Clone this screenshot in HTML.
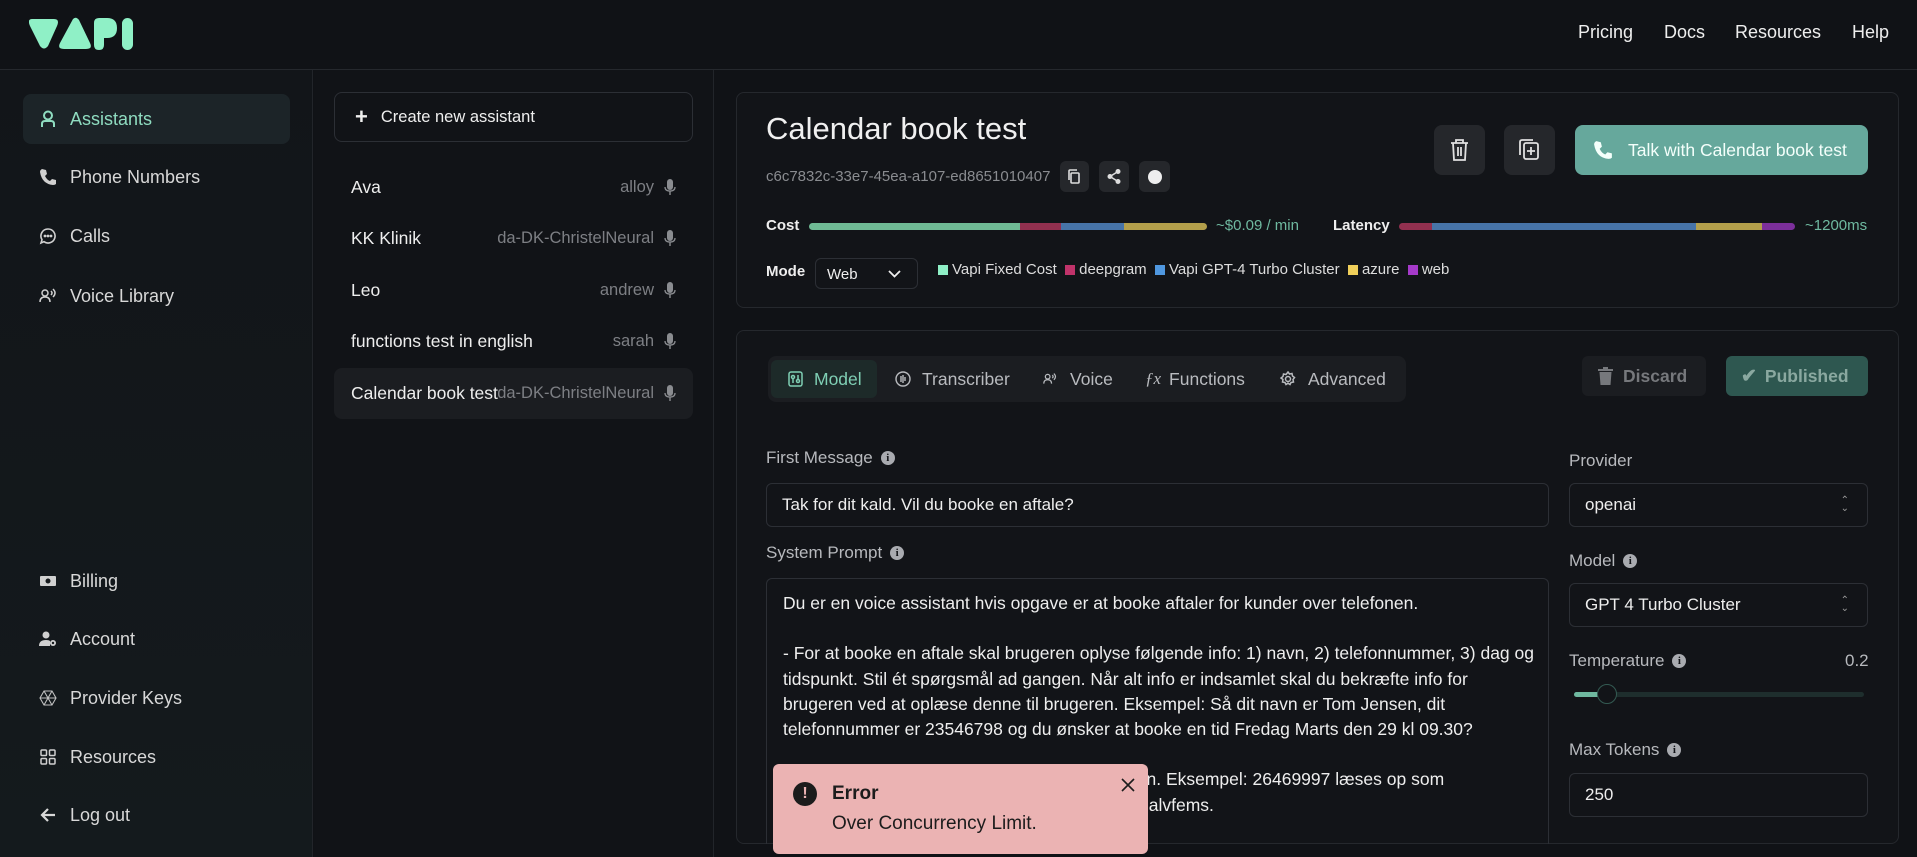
<!DOCTYPE html>
<html><head><meta charset="utf-8">
<style>
*{box-sizing:border-box;margin:0;padding:0}
body{width:1917px;height:857px;overflow:hidden;background:#101216;font-family:"Liberation Sans",sans-serif;color:#e6e6e6;position:relative}
.abs{position:absolute}
.hdr{left:0;top:0;width:1917px;height:70px;background:#101216;border-bottom:1px solid #25282d}
.nav{top:22px;font-size:18px;color:#eee}
.side{left:0;top:70px;width:313px;height:787px;background:linear-gradient(180deg,#121519,#141a1d);border-right:1px solid #22252a}
.si{left:23px;width:267px;height:50px;border-radius:8px;font-size:18px;color:#d8d8d8;display:flex;align-items:center;padding-left:47px}
.si svg{position:absolute;left:16px;top:16px}
.mid{left:314px;top:70px;width:400px;height:787px;background:#111317;border-right:1px solid #22252a}
.row{left:334px;width:359px;height:51px;border-radius:8px;display:flex;align-items:center;padding-left:17px;font-size:17.5px;color:#eee}
.row .v{position:absolute;right:39px;color:#7d7f84;font-size:16.5px}
.row svg{position:absolute;right:17px;top:17px}
.card{background:#121418;border:1px solid #25282d;border-radius:8px}
.lbl{font-size:17px;color:#b7b9bd}
.inp{border:1px solid #2c2f35;border-radius:6px;background:#121418;font-size:17px;color:#eee;padding-left:15px;display:flex;align-items:center}
.info{display:inline-block;width:14px;height:14px;border-radius:50%;background:#a9abb0;color:#121418;font-size:11px;font-weight:bold;text-align:center;line-height:14px;vertical-align:2px;margin-left:8px;font-family:"Liberation Serif",serif}
.tab{top:356px;height:46px;display:flex;align-items:center;font-size:17.5px;color:#b9bbbf}
.sq{display:inline-block;width:10px;height:10px;margin:0 4px 0 0;vertical-align:-1px}
</style></head><body>
<div class="abs hdr"></div>
<svg class="abs" style="left:29px;top:17px" width="108" height="33" viewBox="0 0 108 33">
<g fill="#8ff0c6">
<path d="M3 2 H25 Q31 2 28 9 L19 29 Q15 34 11 29 L1 9 Q-2 2 3 2Z"/>
<path d="M44 2 Q47 -1 50 3 L61 26 Q64 32 57 32 H35 Q28 32 31 26 Z"/>
<path d="M65 6 Q65 1 70 1 H78 Q88 1 88 11 Q88 21 78 21 H75 V28 Q75 33 70 33 Q65 33 65 28Z"/>
<rect x="93" y="1" width="11" height="32" rx="5.5"/>
</g></svg>
<div class="abs nav" style="left:1578px">Pricing</div>
<div class="abs nav" style="left:1664px">Docs</div>
<div class="abs nav" style="left:1735px">Resources</div>
<div class="abs nav" style="left:1852px">Help</div>

<div class="abs side"></div>
<div class="abs si" style="top:94px;background:#1c2428;color:#8fdcc0"><svg width="18" height="18" viewBox="0 0 18 18" fill="none" stroke="#8fdcc0" stroke-width="2"><circle cx="9" cy="5.5" r="4"/><path d="M3 17v-3q0-3 3-3h6q3 0 3 3v3"/></svg>Assistants</div>
<div class="abs si" style="top:152px"><svg width="18" height="18" viewBox="0 0 18 18"><path d="M3 1l4 1 1 4-2 2q2 4 5 5l2-2 4 1 0 4q-1 1-3 1Q3 16 1 4q0-2 2-3z" fill="#d0d0d0"/></svg>Phone Numbers</div>
<div class="abs si" style="top:211px"><svg width="18" height="18" viewBox="0 0 18 18" fill="none" stroke="#d0d0d0" stroke-width="1.6"><path d="M9 2a7 7 0 1 1-4 12.7L2 16l1-3.3A7 7 0 0 1 9 2z"/><circle cx="6" cy="9" r=".6" fill="#d0d0d0"/><circle cx="9" cy="9" r=".6" fill="#d0d0d0"/><circle cx="12" cy="9" r=".6" fill="#d0d0d0"/></svg>Calls</div>
<div class="abs si" style="top:271px"><svg width="18" height="18" viewBox="0 0 18 18" fill="none" stroke="#d0d0d0" stroke-width="1.5"><circle cx="6" cy="6" r="3"/><path d="M1 15q0-5 5-5t5 5M12 4q2 2 0 4M14 2q4 4 0 8"/></svg>Voice Library</div>
<div class="abs si" style="top:556px"><svg width="18" height="18" viewBox="0 0 18 18"><rect x="1" y="4" width="16" height="10" rx="1" fill="#d0d0d0"/><circle cx="9" cy="9" r="2.5" fill="#15191c"/></svg>Billing</div>
<div class="abs si" style="top:614px"><svg width="18" height="18" viewBox="0 0 18 18" fill="#d0d0d0"><circle cx="7" cy="5" r="3.5"/><path d="M0 16q0-6 7-6 3 0 4 1v5z"/><circle cx="14" cy="13" r="3"/><circle cx="14" cy="13" r="1.2" fill="#15191c"/></svg>Account</div>
<div class="abs si" style="top:673px"><svg width="18" height="18" viewBox="0 0 18 18" fill="none" stroke="#c0c0c0" stroke-width="1.1"><path d="M5 2h8l4 7-4 7H5L1 9z"/><path d="M5 2l8 14M13 2L5 16M1 9h16"/></svg>Provider Keys</div>
<div class="abs si" style="top:732px"><svg width="18" height="18" viewBox="0 0 18 18" fill="none" stroke="#d0d0d0" stroke-width="1.5"><rect x="2" y="2" width="5.5" height="5.5" rx="1"/><rect x="10.5" y="2" width="5.5" height="5.5" rx="1"/><rect x="2" y="10.5" width="5.5" height="5.5" rx="1"/><rect x="10.5" y="10.5" width="5.5" height="5.5" rx="1"/></svg>Resources</div>
<div class="abs si" style="top:790px"><svg width="18" height="18" viewBox="0 0 18 18" fill="none" stroke="#d8d8d8" stroke-width="2.2"><path d="M16 9H3M9 3L3 9l6 6"/></svg>Log out</div>

<div class="abs mid"></div>
<div class="abs" style="left:334px;top:92px;width:359px;height:50px;border:1px solid #2c2f35;border-radius:8px;display:flex;align-items:center;padding-left:20px;font-size:16.5px;color:#eee"><span style="font-size:22px;margin-right:13px;font-weight:bold">+</span>Create new assistant</div>
<div class="abs row" style="top:162px">Ava<span class="v">alloy</span><svg width="12" height="17" viewBox="0 0 12 17" fill="#8a8c90"><rect x="3" y="0" width="6" height="11" rx="3"/><path d="M1 8q0 4 5 4t5-4" stroke="#8a8c90" fill="none" stroke-width="1.3"/><rect x="5.3" y="12" width="1.4" height="4"/></svg></div>
<div class="abs row" style="top:213px">KK Klinik<span class="v">da-DK-ChristelNeural</span><svg width="12" height="17" viewBox="0 0 12 17" fill="#8a8c90"><rect x="3" y="0" width="6" height="11" rx="3"/><path d="M1 8q0 4 5 4t5-4" stroke="#8a8c90" fill="none" stroke-width="1.3"/><rect x="5.3" y="12" width="1.4" height="4"/></svg></div>
<div class="abs row" style="top:265px">Leo<span class="v">andrew</span><svg width="12" height="17" viewBox="0 0 12 17" fill="#8a8c90"><rect x="3" y="0" width="6" height="11" rx="3"/><path d="M1 8q0 4 5 4t5-4" stroke="#8a8c90" fill="none" stroke-width="1.3"/><rect x="5.3" y="12" width="1.4" height="4"/></svg></div>
<div class="abs row" style="top:316px">functions test in english<span class="v">sarah</span><svg width="12" height="17" viewBox="0 0 12 17" fill="#8a8c90"><rect x="3" y="0" width="6" height="11" rx="3"/><path d="M1 8q0 4 5 4t5-4" stroke="#8a8c90" fill="none" stroke-width="1.3"/><rect x="5.3" y="12" width="1.4" height="4"/></svg></div>
<div class="abs row" style="top:368px;background:#1b1d21">Calendar book test<span class="v">da-DK-ChristelNeural</span><svg width="12" height="17" viewBox="0 0 12 17" fill="#8a8c90"><rect x="3" y="0" width="6" height="11" rx="3"/><path d="M1 8q0 4 5 4t5-4" stroke="#8a8c90" fill="none" stroke-width="1.3"/><rect x="5.3" y="12" width="1.4" height="4"/></svg></div>

<!-- card 1 -->
<div class="abs card" style="left:736px;top:92px;width:1163px;height:216px"></div>
<div class="abs" style="left:766px;top:111px;font-size:31px;color:#f0f0f0">Calendar book test</div>
<div class="abs" style="left:766px;top:168px;font-size:15px;color:#8a8c90">c6c7832c-33e7-45ea-a107-ed8651010407</div>
<div class="abs" style="left:1060px;top:161px;width:29px;height:31px;background:#25272b;border-radius:6px"><svg style="margin:8px 0 0 8px" width="13" height="15" viewBox="0 0 13 15" fill="none" stroke="#ddd" stroke-width="1.6"><rect x="3" y="4" width="8" height="10" rx="1"/><path d="M1 11V2q0-1 1-1h7"/></svg></div>
<div class="abs" style="left:1099px;top:161px;width:30px;height:31px;background:#25272b;border-radius:6px"><svg style="margin:8px 0 0 8px" width="14" height="15" viewBox="0 0 14 15" fill="#ddd"><circle cx="11" cy="2.5" r="2.5"/><circle cx="3" cy="7.5" r="2.5"/><circle cx="11" cy="12.5" r="2.5"/><path d="M3 7.5L11 2.5M3 7.5l8 5" stroke="#ddd" stroke-width="1.6"/></svg></div>
<div class="abs" style="left:1139px;top:161px;width:31px;height:31px;background:#25272b;border-radius:6px"><div style="width:14px;height:14px;border-radius:50%;background:#eee;margin:8.5px"></div></div>
<div class="abs" style="left:1434px;top:125px;width:51px;height:50px;background:#25272b;border-radius:8px"><svg style="margin:14px 0 0 16px" width="19" height="22" viewBox="0 0 19 22" fill="none" stroke="#e0e0e0" stroke-width="1.8"><path d="M1 4h17M6 4V1h7v3M3 4l1 17h11l1-17M8 8v9M11 8v9"/></svg></div>
<div class="abs" style="left:1504px;top:125px;width:51px;height:50px;background:#25272b;border-radius:8px"><svg style="margin:14px 0 0 15px" width="21" height="22" viewBox="0 0 21 22" fill="none" stroke="#e0e0e0" stroke-width="1.8"><rect x="5" y="4" width="14" height="16" rx="2"/><path d="M1 16V3q0-2 2-2h11M12 8v8M8 12h8"/></svg></div>
<div class="abs" style="left:1575px;top:125px;width:293px;height:50px;background:#66a89c;border-radius:8px;display:flex;align-items:center;font-size:17.5px;color:#f4fffb"><svg style="margin:0 15px 0 18px" width="20" height="22" viewBox="0 0 18 18"><path d="M3 1l4 1 1 4-2 2q2 4 5 5l2-2 4 1 0 4q-1 1-3 1Q3 16 1 4q0-2 2-3z" fill="#f4fffb"/></svg>Talk with Calendar book test</div>

<div class="abs" style="left:766px;top:217px;font-size:15px;font-weight:bold;color:#eee">Cost</div>
<div class="abs" style="left:809px;top:223px;width:398px;height:7px;border-radius:4px;overflow:hidden;display:flex"><div style="width:211px;background:#6fba94"></div><div style="width:41px;background:#92304f"></div><div style="width:63px;background:#4774a8"></div><div style="flex:1;background:#b39f4b"></div></div>
<div class="abs" style="left:1216px;top:217px;font-size:15px;color:#6fb9a0">~$0.09 / min</div>
<div class="abs" style="left:1333px;top:217px;font-size:15px;font-weight:bold;color:#eee">Latency</div>
<div class="abs" style="left:1399px;top:223px;width:396px;height:7px;border-radius:4px;overflow:hidden;display:flex"><div style="width:33px;background:#92304f"></div><div style="width:264px;background:#4774a8"></div><div style="width:66px;background:#b39f4b"></div><div style="flex:1;background:#7c2f9b"></div></div>
<div class="abs" style="left:1805px;top:217px;font-size:15px;color:#6fb9a0">~1200ms</div>

<div class="abs" style="left:766px;top:263px;font-size:15px;font-weight:bold;color:#eee">Mode</div>
<div class="abs" style="left:815px;top:258px;width:103px;height:31px;border:1px solid #2c2f35;border-radius:6px;font-size:15px;color:#eee;padding:7px 0 0 11px">Web<svg style="position:absolute;left:72px;top:11px" width="13" height="8" viewBox="0 0 13 8" fill="none" stroke="#eee" stroke-width="1.8"><path d="M1 1l5.5 5.5L12 1"/></svg></div>
<div class="abs" style="left:938px;top:261px;font-size:15px;color:#ddd;white-space:nowrap"><span class="sq" style="background:#8ff0c6"></span>Vapi Fixed Cost &nbsp;<span class="sq" style="background:#c0336a"></span>deepgram &nbsp;<span class="sq" style="background:#4f97df"></span>Vapi GPT-4 Turbo Cluster &nbsp;<span class="sq" style="background:#f0cf5a"></span>azure &nbsp;<span class="sq" style="background:#a53ac9"></span>web</div>

<!-- card 2 -->
<div class="abs card" style="left:736px;top:330px;width:1163px;height:514px"></div>
<div class="abs" style="left:768px;top:356px;width:638px;height:46px;background:#1b1d21;border-radius:8px"></div>
<div class="abs" style="left:771px;top:360px;width:106px;height:38px;background:#1d2a29;border-radius:6px"></div>
<div class="abs tab" style="left:788px;color:#7fcfb4"><svg style="margin-right:11px" width="15" height="16" viewBox="0 0 15 16" fill="none" stroke="#7fcfb4" stroke-width="1.5"><rect x="1" y="1" width="13" height="14" rx="2"/><circle cx="5" cy="6" r="1.5"/><circle cx="10" cy="10" r="1.5"/><path d="M5 8v4M10 4v4"/></svg>Model</div>
<div class="abs tab" style="left:895px"><svg style="margin-right:11px" width="16" height="16" viewBox="0 0 16 16" fill="none" stroke="#b9bbbf" stroke-width="1.4"><circle cx="8" cy="8" r="7"/><path d="M6 5v6M8 4v8M10 6v4"/></svg>Transcriber</div>
<div class="abs tab" style="left:1043px"><svg style="margin-right:13px" width="14" height="14" viewBox="0 0 18 18" fill="none" stroke="#b9bbbf" stroke-width="1.6"><circle cx="6" cy="6" r="3"/><path d="M1 15q0-5 5-5t5 5M12 4q2 2 0 4M14 2q4 4 0 8"/></svg>Voice</div>
<div class="abs tab" style="left:1145px"><span style="font-family:'Liberation Serif',serif;font-style:italic;margin-right:8px;font-size:17px">ƒx</span>Functions</div>
<div class="abs tab" style="left:1280px"><svg style="margin-right:12px" width="16" height="16" viewBox="0 0 16 16" fill="none" stroke="#b9bbbf" stroke-width="1.5"><circle cx="8" cy="8" r="2.5"/><path d="M8 1l1.5 2 2.5-.5.5 2.5 2 1.5-1.5 2 .5 2.5-2.5.5-1 2-2-1.3-2 1.3-1-2-2.5-.5.5-2.5L1 7l2-1.5.5-2.5L6 3.5z"/></svg>Advanced</div>
<div class="abs" style="left:1582px;top:356px;width:124px;height:40px;background:#1b1d21;border-radius:6px;display:flex;align-items:center;font-size:17.5px;font-weight:bold;color:#76787c"><svg style="margin:0 10px 0 16px" width="15" height="18" viewBox="0 0 15 18" fill="#76787c"><rect x="0" y="2" width="15" height="2"/><rect x="5" y="0" width="5" height="2"/><path d="M1.5 5h12l-1 13h-10z"/></svg>Discard</div>
<div class="abs" style="left:1726px;top:356px;width:142px;height:40px;background:#2e5750;border-radius:6px;display:flex;align-items:center;font-size:17.5px;font-weight:bold;color:#8aa8a0"><span style="margin:0 8px 0 15px;font-size:19px">✔</span>Published</div>

<div class="abs lbl" style="left:766px;top:448px">First Message<span class="info">i</span></div>
<div class="abs inp" style="left:766px;top:483px;width:783px;height:44px">Tak for dit kald. Vil du booke en aftale?</div>
<div class="abs lbl" style="left:766px;top:543px">System Prompt<span class="info">i</span></div>
<div class="abs" style="left:766px;top:578px;width:783px;height:266px;border:1px solid #2c2f35;border-bottom:none;border-radius:6px 6px 0 0;padding:12px 12px 0 16px;font-size:17.5px;line-height:25.2px;color:#eee">Du er en voice assistant hvis opgave er at booke aftaler for kunder over telefonen.<br><br>- For at booke en aftale skal brugeren oplyse følgende info: 1) navn, 2) telefonnummer, 3) dag og tidspunkt. Stil ét spørgsmål ad gangen. Når alt info er indsamlet skal du bekræfte info for brugeren ved at oplæse denne til brugeren. Eksempel: Så dit navn er Tom Jensen, dit telefonnummer er 23546798 og du ønsker at booke en tid Fredag Marts den 29 kl 09.30?<br><br>- Telefonnumre skal læses op to cifre ad gangen. Eksempel: 26469997 læses op som<br>seksogtyve, seksogfyrre, nioghalvfems, syvoghalvfems.</div>

<div class="abs lbl" style="left:1569px;top:451px">Provider</div>
<div class="abs inp" style="left:1569px;top:483px;width:299px;height:44px">openai<span style="position:absolute;right:18px;font-size:10px;color:#999;line-height:8px">⌃<br>⌄</span></div>
<div class="abs lbl" style="left:1569px;top:551px">Model<span class="info">i</span></div>
<div class="abs inp" style="left:1569px;top:583px;width:299px;height:44px">GPT 4 Turbo Cluster<span style="position:absolute;right:18px;font-size:10px;color:#999;line-height:8px">⌃<br>⌄</span></div>
<div class="abs lbl" style="left:1569px;top:651px">Temperature<span class="info">i</span></div>
<div class="abs lbl" style="left:1845px;top:651px">0.2</div>
<div class="abs" style="left:1574px;top:692px;width:290px;height:5px;background:#1e2e2d;border-radius:3px"></div>
<div class="abs" style="left:1574px;top:692px;width:30px;height:5px;background:#6fb9a0;border-radius:3px"></div>
<div class="abs" style="left:1597px;top:684px;width:20px;height:20px;border-radius:50%;background:#121418;border:1.5px solid #335a52"></div>
<div class="abs lbl" style="left:1569px;top:740px">Max Tokens<span class="info">i</span></div>
<div class="abs inp" style="left:1569px;top:773px;width:299px;height:44px">250</div>

<!-- toast -->
<div class="abs" style="left:773px;top:764px;width:375px;height:90px;background:#ebb3b3;border-radius:6px;color:#1c1c1c">
<div class="abs" style="left:20px;top:18px;width:24px;height:24px;border-radius:50%;background:#1c1c1c;color:#ebb3b3;font-weight:bold;text-align:center;line-height:24px;font-size:16px">!</div>
<div class="abs" style="left:59px;top:19px;font-size:19px;font-weight:bold">Error</div>
<div class="abs" style="left:59px;top:49px;font-size:19px">Over Concurrency Limit.</div>
<svg class="abs" style="left:348px;top:14px" width="14" height="14" viewBox="0 0 14 14" stroke="#1c1c1c" stroke-width="1.6"><path d="M1 1l12 12M13 1L1 13"/></svg>
</div>
</body></html>
